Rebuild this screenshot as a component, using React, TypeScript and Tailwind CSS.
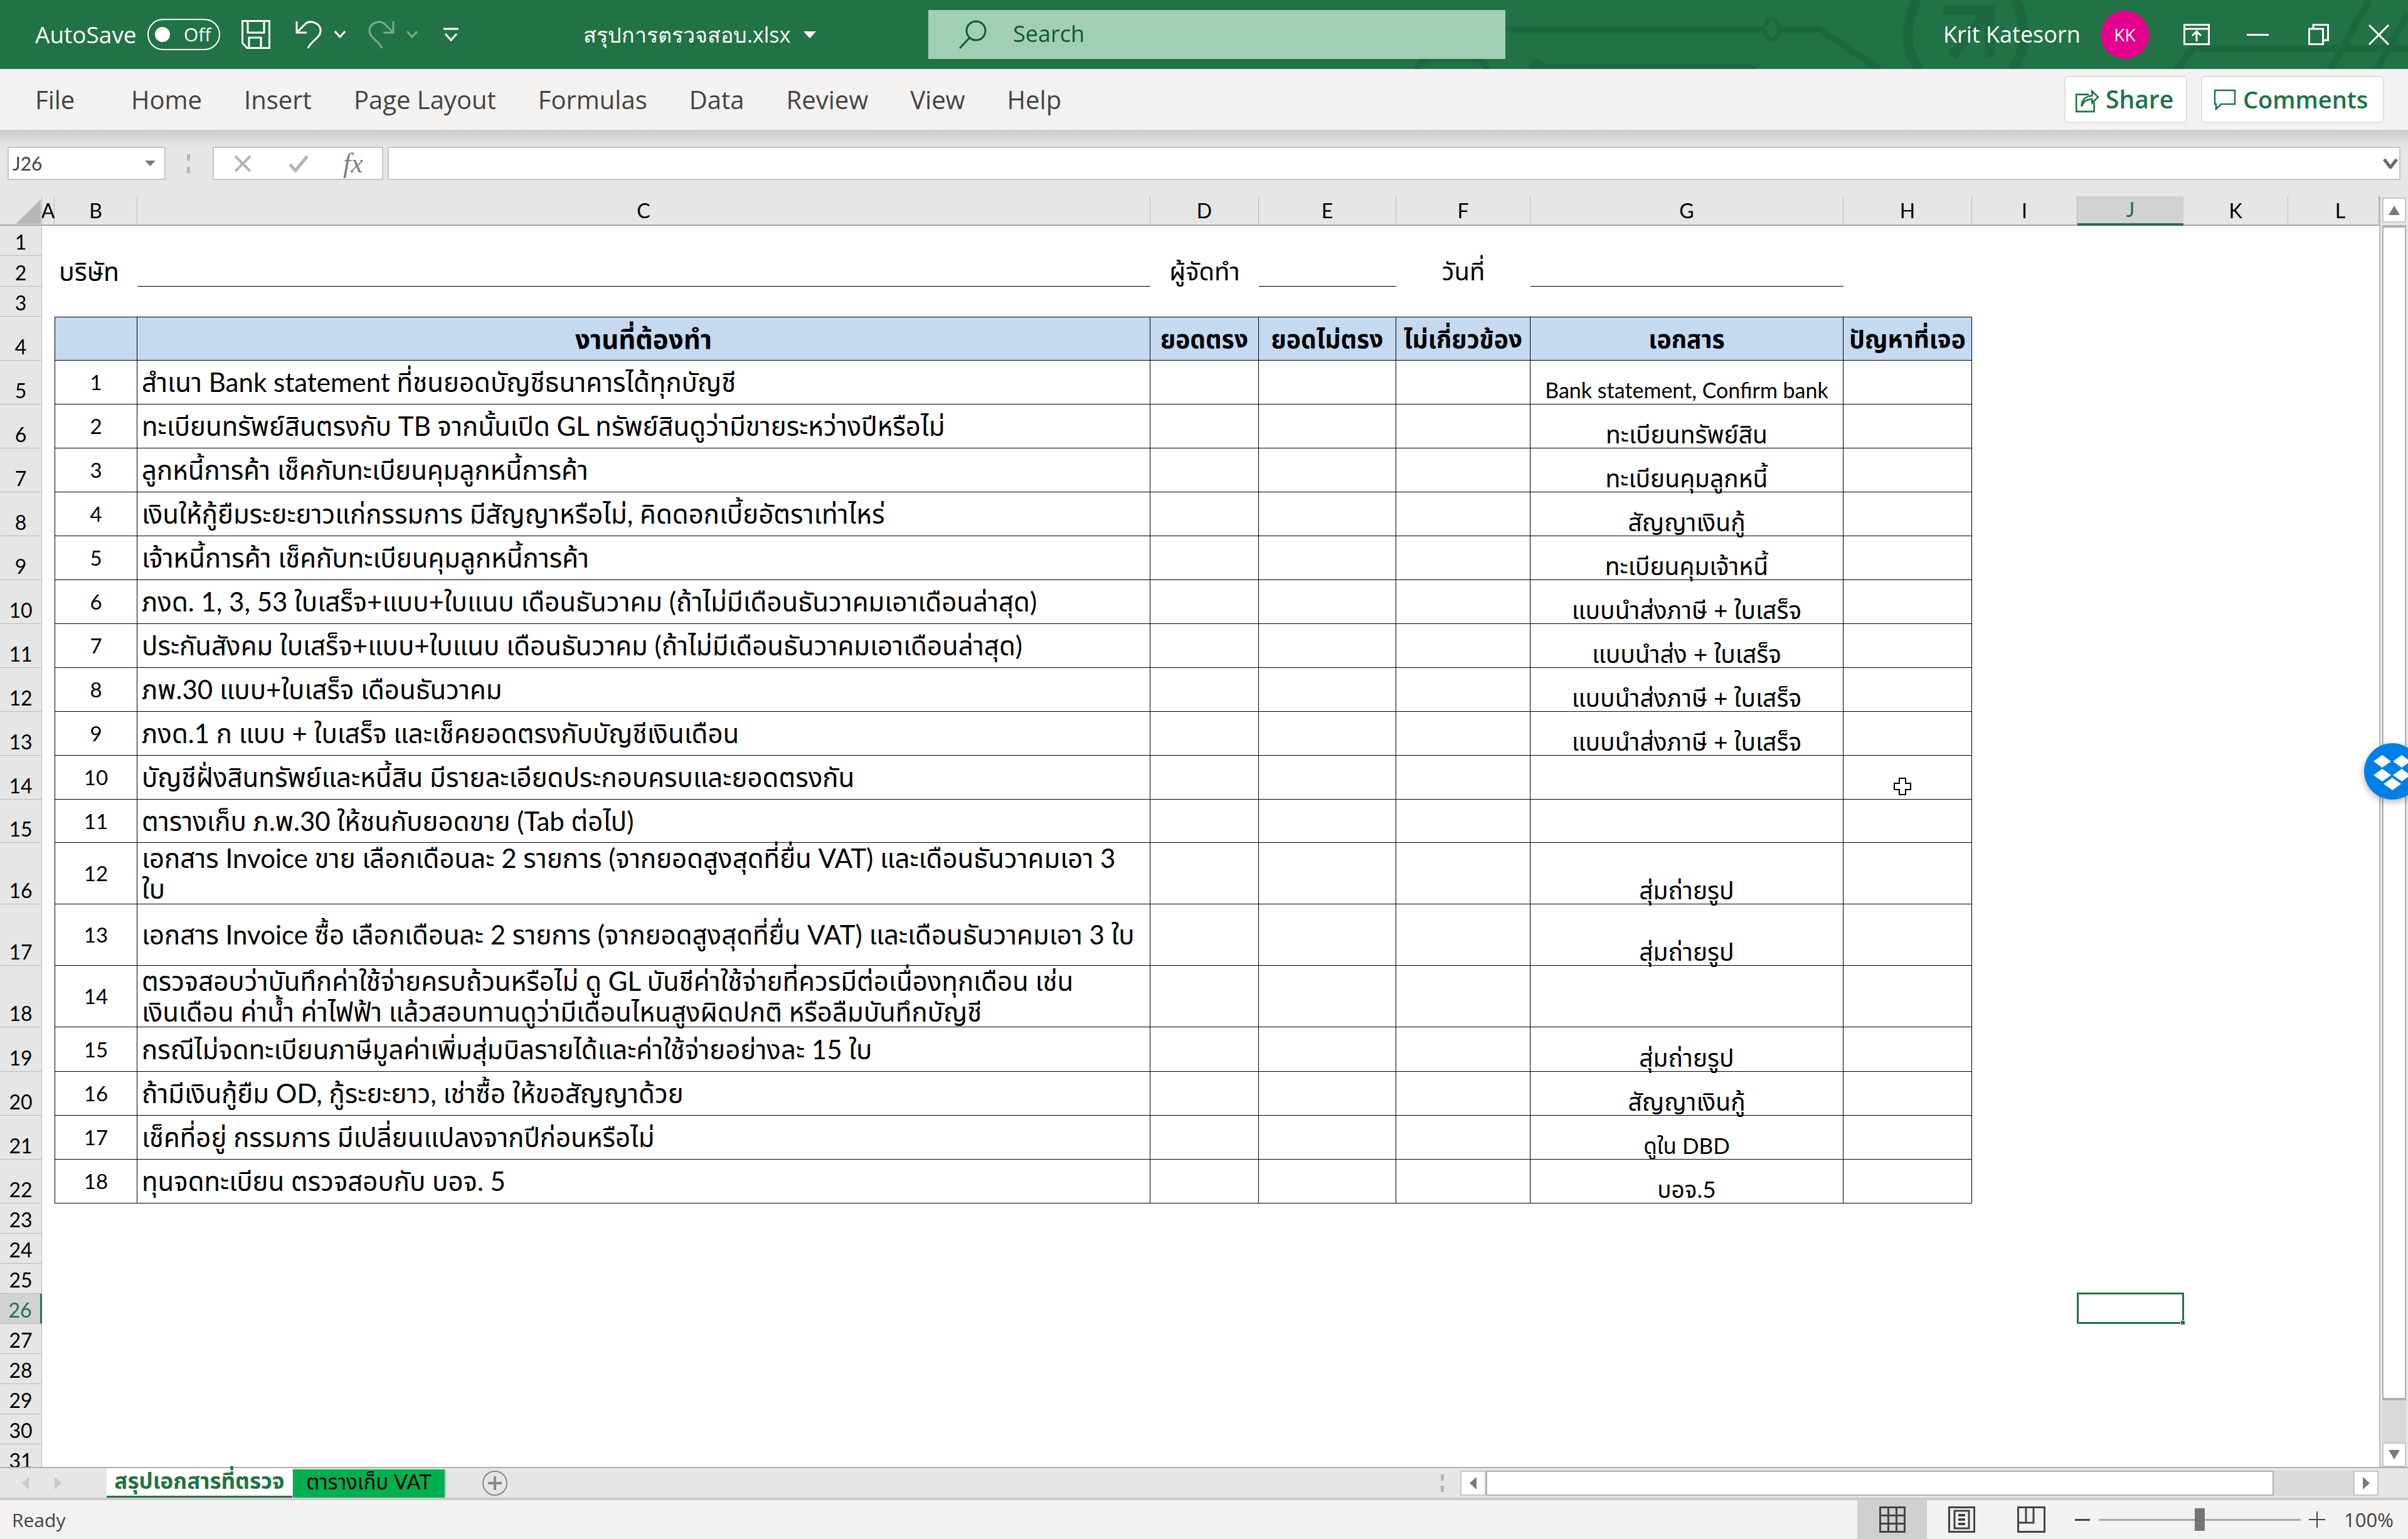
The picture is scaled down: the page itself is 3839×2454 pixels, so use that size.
const tasks = [
  { label: 'สำเนา Bank statement ที่ชนยอดบัญชีธนาคารได้ทุกบัญชี', doc: 'Bank statement, Confirm bank', docSize: 'text-[34px]' },
  { label: 'ทะเบียนทรัพย์สินตรงกับ TB จากนั้นเปิด GL ทรัพย์สินดูว่ามีขายระหว่างปีหรือไม่', doc: 'ทะเบียนทรัพย์สิน', docSize: 'text-[39px]' },
  { label: 'ลูกหนี้การค้า เช็คกับทะเบียนคุมลูกหนี้การค้า', doc: 'ทะเบียนคุมลูกหนี้', docSize: 'text-[39px]' },
  { label: 'เงินให้กู้ยืมระยะยาวแก่กรรมการ มีสัญญาหรือไม่, คิดดอกเบี้ยอัตราเท่าไหร่', doc: 'สัญญาเงินกู้', docSize: 'text-[39px]' },
  { label: 'เจ้าหนี้การค้า เช็คกับทะเบียนคุมลูกหนี้การค้า', doc: 'ทะเบียนคุมเจ้าหนี้', docSize: 'text-[39px]' },
  { label: 'ภงด. 1, 3, 53 ใบเสร็จ+แบบ+ใบแนบ เดือนธันวาคม (ถ้าไม่มีเดือนธันวาคมเอาเดือนล่าสุด)', doc: 'แบบนำส่งภาษี + ใบเสร็จ', docSize: 'text-[39px]' },
  { label: 'ประกันสังคม ใบเสร็จ+แบบ+ใบแนบ เดือนธันวาคม (ถ้าไม่มีเดือนธันวาคมเอาเดือนล่าสุด)', doc: 'แบบนำส่ง + ใบเสร็จ', docSize: 'text-[39px]' },
  { label: 'ภพ.30 แบบ+ใบเสร็จ เดือนธันวาคม', doc: 'แบบนำส่งภาษี + ใบเสร็จ', docSize: 'text-[39px]' },
  { label: 'ภงด.1 ก แบบ + ใบเสร็จ และเช็คยอดตรงกับบัญชีเงินเดือน', doc: 'แบบนำส่งภาษี + ใบเสร็จ', docSize: 'text-[39px]' },
  { label: 'บัญชีฝั่งสินทรัพย์และหนี้สิน มีรายละเอียดประกอบครบและยอดตรงกัน', doc: '', docSize: '' },
  { label: 'ตารางเก็บ ภ.พ.30 ให้ชนกับยอดขาย (Tab ต่อไป)', doc: '', docSize: '' },
  { label: 'เอกสาร Invoice ขาย เลือกเดือนละ 2 รายการ (จากยอดสูงสุดที่ยื่น VAT) และเดือนธันวาคมเอา 3\nใบ', doc: 'สุ่มถ่ายรูป', docSize: 'text-[39px]' },
  { label: 'เอกสาร Invoice ซื้อ เลือกเดือนละ 2 รายการ (จากยอดสูงสุดที่ยื่น VAT) และเดือนธันวาคมเอา 3 ใบ', doc: 'สุ่มถ่ายรูป', docSize: 'text-[39px]' },
  { label: 'ตรวจสอบว่าบันทึกค่าใช้จ่ายครบถ้วนหรือไม่ ดู GL บันชีค่าใช้จ่ายที่ควรมีต่อเนื่องทุกเดือน เช่น\nเงินเดือน ค่าน้ำ ค่าไฟฟ้า แล้วสอบทานดูว่ามีเดือนไหนสูงผิดปกติ หรือลืมบันทึกบัญชี', doc: '', docSize: '' },
  { label: 'กรณีไม่จดทะเบียนภาษีมูลค่าเพิ่มสุ่มบิลรายได้และค่าใช้จ่ายอย่างละ 15 ใบ', doc: 'สุ่มถ่ายรูป', docSize: 'text-[39px]' },
  { label: 'ถ้ามีเงินกู้ยืม OD, กู้ระยะยาว, เช่าซื้อ ให้ขอสัญญาด้วย', doc: 'สัญญาเงินกู้', docSize: 'text-[39px]' },
  { label: 'เช็คที่อยู่ กรรมการ มีเปลี่ยนแปลงจากปีก่อนหรือไม่', doc: 'ดูใน DBD', docSize: 'text-[35px]' },
  { label: 'ทุนจดทะเบียน ตรวจสอบกับ บอจ. 5', doc: 'บอจ.5', docSize: 'text-[37px]' },
];

const columns = ['A', 'B', 'C', 'D', 'E', 'F', 'G', 'H', 'I', 'J', 'K', 'L'];
const tableHeaders = ['', 'งานที่ต้องทำ', 'ยอดตรง', 'ยอดไม่ตรง', 'ไม่เกี่ยวข้อง', 'เอกสาร', 'ปัญหาที่เจอ'];

const tableCell = 'border-r border-b border-black flex items-center';

function RowHead({ n }: { n: number }) {
  const active = n === 26;
  return (
    <div
      className={`flex items-end justify-center border-b border-[#b9b9b9] text-[32px] leading-[42px] ${
        active ? 'bg-[#d2d2d2] text-[#217346] border-r-[3px] border-r-[#217346]' : 'bg-[#e6e6e6] text-black border-r border-r-[#b9b9b9]'
      }`}
    >
      {n}
    </div>
  );
}

function Blank({ n, count }: { n: number; count: number }) {
  return (
    <>
      {Array.from({ length: count }).map((_, i) => (
        <div key={`${n}-${i}`} />
      ))}
    </>
  );
}

function TitleBar() {
  return (
    <div className="relative flex h-[110px] items-center overflow-hidden bg-[#217346] font-['Open_Sans',sans-serif] text-white">
      <svg className="absolute left-0 top-0" width="3839" height="110" fill="none" stroke="#1e6840" strokeWidth="11">
        <path d="M2400 47H2813M2838 47H2900L2995 110" />
        <ellipse cx="2825" cy="47" rx="11" ry="17" strokeWidth="7" />
        <path d="M2600 108H2790L2800 112" />
        <path d="M2259 112C2262 94 2280 92 2314 92C2350 92 2368 94 2371 112" />
        <circle cx="2450" cy="106" r="7" />
        <path d="M2450 108H2640" />
        <path d="M3056 0C3036 40 3036 80 3060 110M3212 0C3232 40 3232 80 3208 110" strokeWidth="16" />
        <path d="M3098 16H3172V92M3172 16L3112 90" strokeWidth="16" />
        <path d="M3470 110L3497 77H3839" />
        <path d="M3777 0L3715 110M3839 20L3790 110" />
      </svg>

      <div className="relative ml-[56px] flex items-center">
        <span className="w-[164px] whitespace-nowrap text-[37px]">AutoSave</span>
        <div className="ml-[15px] flex h-[50px] w-[116px] items-center rounded-full border-2 border-white pl-[10px]">
          <div className="h-[24px] w-[24px] rounded-full bg-white" />
          <span className="ml-[22px] text-[30px] leading-none">Off</span>
        </div>
        <svg className="ml-[34px]" width="46" height="46" viewBox="0 0 46 46" fill="none" stroke="white" strokeWidth="3">
          <path d="M1.5 1.5H44.5V44.5H9L1.5 37Z" />
          <path d="M10 1.5V20H36V1.5M12 44.5V28H31V44.5" />
        </svg>
        <svg className="ml-[39px]" width="44" height="46" viewBox="0 0 44 46" fill="none" stroke="white" strokeWidth="3">
          <path d="M3 2V20H19" />
          <path d="M3 20L18 5C28 -1 42 7 41 18C40 29 26 33 21 45" />
        </svg>
        <svg className="ml-[18px]" width="20" height="12" viewBox="0 0 20 12" fill="none" stroke="white" strokeWidth="3">
          <path d="M2 1L10 10L18 1" />
        </svg>
        <svg className="ml-[34px] opacity-40" width="44" height="46" viewBox="0 0 44 46" fill="none" stroke="white" strokeWidth="3">
          <path d="M41 2V20H25" />
          <path d="M41 20L26 5C16 -1 2 7 3 18C4 29 18 33 23 45" />
        </svg>
        <svg className="ml-[17px] opacity-40" width="20" height="12" viewBox="0 0 20 12" fill="none" stroke="white" strokeWidth="3">
          <path d="M2 1L10 10L18 1" />
        </svg>
        <svg className="ml-[40px]" width="24" height="22" viewBox="0 0 24 22" fill="none" stroke="white" strokeWidth="3">
          <path d="M0 2H24" />
          <path d="M3 10L12 20L21 10" />
        </svg>
        <span className="ml-[199px] text-[34px]">สรุปการตรวจสอบ.xlsx</span>
        <svg className="ml-[21px]" width="20" height="11" viewBox="0 0 20 11" fill="white">
          <path d="M0 0H20L10 11Z" />
        </svg>
      </div>

      <div className="absolute left-[1480px] top-[16px] flex h-[78px] w-[920px] items-center bg-[#a1cfb6] text-[#0f5b2e]">
        <svg className="ml-[48px]" width="46" height="46" viewBox="0 0 46 46" fill="none" stroke="currentColor" strokeWidth="3">
          <circle cx="28" cy="17" r="15" />
          <path d="M18 28L2 45" />
        </svg>
        <span className="ml-[41px] pb-[3px] text-[36px]">Search</span>
      </div>

      <div className="absolute left-[3098px] top-0 flex h-[110px] items-center">
        <span className="w-[217px] whitespace-nowrap text-[36px]">Krit Katesorn</span>
        <div className="ml-[34px] flex h-[77px] w-[77px] items-center justify-center rounded-full bg-[#e3008c] text-[28px]">KK</div>
        <svg className="ml-[55px]" width="42" height="34" viewBox="0 0 42 34" fill="none" stroke="white" strokeWidth="3">
          <rect x="1.5" y="1.5" width="39" height="31" />
          <path d="M1.5 8H40.5M21 28V13M14 19L21 12L28 19" />
        </svg>
        <svg className="ml-[59px]" width="35" height="3" viewBox="0 0 35 3" fill="white">
          <rect width="35" height="3" />
        </svg>
        <svg className="ml-[63px]" width="33" height="34" viewBox="0 0 33 34" fill="none" stroke="white" strokeWidth="3">
          <rect x="1.5" y="8" width="22" height="24.5" />
          <path d="M8 8V1.5H31.5V26H24" />
        </svg>
        <svg className="ml-[63px]" width="33" height="33" viewBox="0 0 33 33" fill="none" stroke="white" strokeWidth="3">
          <path d="M1 1L32 32M32 1L1 32" />
        </svg>
      </div>
    </div>
  );
}

function RibbonTabs() {
  return (
    <div className="flex h-[97px] items-center bg-[#f3f2f1] font-['Open_Sans',sans-serif] text-[40px] text-[#444444]">
      <span className="ml-[56px] w-[153px]">File</span>
      <div className="flex gap-[67px]">
        <span>Home</span>
        <span>Insert</span>
        <span>Page Layout</span>
        <span>Formulas</span>
        <span>Data</span>
        <span>Review</span>
        <span>View</span>
        <span>Help</span>
      </div>
      <div className="ml-auto mr-[38px] flex gap-[22px] text-[#217346]">
        <button className="flex h-[75px] w-[196px] items-center gap-[10px] rounded-md border-2 border-[#e1dfdd] bg-white pl-[14px] font-semibold">
          <svg width="40" height="42" viewBox="0 0 38 40" fill="none" stroke="#217346" strokeWidth="2.5">
            <path d="M22 12H3V38H30V24" />
            <path d="M11 30C11 20 18 14 27 14V7L36 16L27 25V19C20 19 14 22 11 30Z" />
          </svg>
          <span className="text-[39px]">Share</span>
        </button>
        <button className="flex h-[75px] w-[292px] items-center gap-[11px] rounded-md border-2 border-[#e1dfdd] bg-white pl-[18px] font-semibold">
          <svg width="36" height="34" viewBox="0 0 36 34" fill="none" stroke="#217346" strokeWidth="2.5">
            <path d="M2 2H34V24H12L4 32V24H2Z" />
          </svg>
          <span className="text-[38px]">Comments</span>
        </button>
      </div>
    </div>
  );
}

function FormulaBar() {
  return (
    <>
      <div className="h-[27px] bg-gradient-to-b from-[#cbcbcb] to-[#e6e6e6]" />
      <div className="flex h-[53px] items-stretch pl-[12px] pr-[12px]">
        <div className="flex w-[252px] items-center justify-between border-2 border-[#c6c6c6] bg-white pl-[6px] pr-[14px]">
          <span className="text-[30px] text-[#444444]">J26</span>
          <svg width="17" height="9" viewBox="0 0 17 9" fill="#7a7a7a">
            <path d="M0 0H17L8.5 9Z" />
          </svg>
        </div>
        <div className="flex w-[75px] items-center justify-center pr-[3px]">
          <div className="h-[30px] w-[5px] border-l-[5px] border-dashed border-[#b8b8b8]" />
        </div>
        <div className="flex w-[272px] items-center border-2 border-[#c6c6c6] bg-white text-[#b4b4b4]">
          <svg className="ml-[32px]" width="28" height="28" viewBox="0 0 28 28" fill="none" stroke="currentColor" strokeWidth="4">
            <path d="M2 2L26 26M26 2L2 26" />
          </svg>
          <svg className="ml-[58px]" width="34" height="28" viewBox="0 0 34 28" fill="none" stroke="currentColor" strokeWidth="5">
            <path d="M3 15L12 25L31 2" />
          </svg>
          <span className="ml-[54px] font-['Liberation_Serif',serif] text-[44px] italic leading-none text-[#7f7f7f]">fx</span>
        </div>
        <div className="ml-[7px] flex flex-1 items-center justify-end border-2 border-[#c6c6c6] bg-white pr-[2px]">
          <svg width="24" height="16" viewBox="0 0 24 16" fill="none" stroke="#6a6a6a" strokeWidth="5">
            <path d="M2 1L12 14L22 1" />
          </svg>
        </div>
      </div>
      <div className="h-[26px]" />
    </>
  );
}

function Sheet() {
  return (
    <div className="grid h-[2026px] w-[3793px] grid-cols-[67px_20px_132px_1615px_173px_219px_214px_499px_205px_168px_169px_167px_145px] grid-rows-[47px_48px_49px_48px_70px_70px_70px_70px_70px_70px_70px_70px_70px_70px_70px_69px_98px_98px_98px_71px_70px_70px_70px_48px_48px_48px_48px_48px_48px_48px_48px_48px] overflow-hidden bg-white text-[42px] leading-[49px] text-black">
      {/* column header */}
      <div className="relative border-r border-b-2 border-r-[#b9b9b9] border-b-[#a6a6a6] bg-[#e6e6e6]">
        <svg className="absolute left-[25px] top-[5px]" width="40" height="39" viewBox="0 0 40 39" fill="#b7b7b7">
          <path d="M40 0V39H0Z" />
        </svg>
      </div>
      {columns.map(c => (
        <div
          key={c}
          className={`flex items-end justify-center border-b-2 pb-[4px] text-[32px] leading-[36px] ${
            c === 'J' ? 'border-b-[4px] border-b-[#217346] bg-[#d2d2d2] text-[#217346]' : 'border-b-[#a6a6a6] border-r border-r-[#b9b9b9] bg-[#e6e6e6]'
          } ${c === 'L' ? 'pl-[22px]' : ''}`}
        >
          {c}
        </div>
      ))}

      {/* row 1 */}
      <RowHead n={1} />
      <Blank n={1} count={12} />

      {/* row 2 */}
      <RowHead n={2} />
      <div />
      <div className="flex items-center whitespace-nowrap pl-[7px] text-[41px]">บริษัท</div>
      <div className="border-b border-black" />
      <div className="flex items-center justify-center text-[40px]">ผู้จัดทำ</div>
      <div className="border-b border-black" />
      <div className="flex items-center justify-center text-[40px]">วันที่</div>
      <div className="border-b border-black" />
      <Blank n={2} count={5} />

      {/* row 3 */}
      <RowHead n={3} />
      <Blank n={3} count={12} />

      {/* row 4 table head */}
      <RowHead n={4} />
      <div />
      {tableHeaders.map((h, i) => (
        <div
          key={i}
          className={`flex items-center justify-center whitespace-nowrap border-t border-r border-b border-black bg-[#c5d9f1] font-bold ${i === 0 ? 'border-l' : ''} ${i === 1 ? 'text-[42px]' : 'text-[39px]'}`}
        >
          {h}
        </div>
      ))}
      <Blank n={4} count={4} />

      {/* rows 5-22 */}
      {tasks.map((t, i) => {
        const n = i + 5;
        return (
          <div key={n} className="contents">
            <RowHead n={n} />
            <div />
            <div className={`${tableCell} justify-center border-l text-[33px]`}>{i + 1}</div>
            <div className={`${tableCell} whitespace-pre pl-[7px]`}>{t.label}</div>
            <div className={tableCell} />
            <div className={tableCell} />
            <div className={tableCell} />
            <div className={`flex items-end justify-center whitespace-nowrap border-r border-b border-black pb-[1px] leading-[42px] ${t.docSize}`}>{t.doc}</div>
            <div className={tableCell} />
            <Blank n={n} count={4} />
          </div>
        );
      })}

      {/* rows 23-31 */}
      {[23, 24, 25, 26, 27, 28, 29, 30, 31].map(n => (
        <div key={n} className="contents">
          <RowHead n={n} />
          {n === 26 ? (
            <>
              <Blank n={n} count={9} />
              <div className="relative -mx-[1px] -mt-[2px] border-[3px] border-[#217346]">
                <div className="absolute -bottom-[5px] -right-[5px] h-[8px] w-[8px] border border-white bg-[#217346]" />
              </div>
              <Blank n={n + 100} count={2} />
            </>
          ) : (
            <Blank n={n} count={12} />
          )}
        </div>
      ))}
    </div>
  );
}

function VerticalScroll() {
  return (
    <div className="flex h-[2026px] w-[46px] flex-col items-center border-l-2 border-[#b9b9b9] bg-[#e6e6e6] pt-[2px]">
      <div className="flex h-[40px] w-[38px] items-center justify-center border-2 border-[#c6c6c6] bg-white">
        <svg width="18" height="15" viewBox="0 0 18 15" fill="#7a7a7a">
          <path d="M9 0L18 15H0Z" />
        </svg>
      </div>
      <div className="mt-[4px] h-[1874px] w-[38px] border-x-2 border-y-4 border-[#b0b0b0] bg-white" />
      <div className="w-[38px] flex-1 bg-[#d9d9d9]" />
      <div className="flex h-[39px] w-[38px] items-center justify-center border-2 border-[#c6c6c6] bg-white">
        <svg width="18" height="15" viewBox="0 0 18 15" fill="#7a7a7a">
          <path d="M0 0H18L9 15Z" />
        </svg>
      </div>
    </div>
  );
}

function TabBar() {
  return (
    <div className="flex h-[53px] items-stretch border-t-2 border-b-4 border-t-[#b0b0b0] border-b-[#c9c9c9] bg-[#e6e6e6]">
      <div className="flex w-[170px] items-center pl-[35px]">
        <svg width="11" height="20" viewBox="0 0 11 20" fill="#c8c8c8">
          <path d="M11 0V20L0 10Z" />
        </svg>
        <svg className="ml-[41px]" width="11" height="20" viewBox="0 0 11 20" fill="#c8c8c8">
          <path d="M0 0V20L11 10Z" />
        </svg>
      </div>
      <div className="flex w-[296px] items-center justify-center border-b-[3px] border-[#217346] bg-white pb-[5px] text-[35px] font-bold text-[#217346]">
        สรุปเอกสารที่ตรวจ
      </div>
      <div className="ml-[1px] mt-[2px] flex w-[242px] items-center justify-center bg-[#00b050] pb-[6px] text-[33px] text-black">
        ตารางเก็บ VAT
      </div>
      <div className="my-[2px] ml-[1px] w-[1px] bg-[#a6a6a6]" />
      <div className="flex w-[155px] items-center justify-center">
        <div className="flex h-[40px] w-[40px] items-center justify-center rounded-full border-2 border-[#8a8a8a] text-[#8a8a8a]">
          <svg width="22" height="22" viewBox="0 0 22 22" fill="currentColor">
            <path d="M9 0H13V9H22V13H13V22H9V13H0V9H9Z" />
          </svg>
        </div>
      </div>
      <div className="flex flex-1 items-center justify-end">
        <div className="mr-[26px] h-[28px] w-[5px] border-l-[5px] border-dashed border-[#b8b8b8]" />
        <div className="flex h-[40px] w-[41px] items-center justify-center border-2 border-[#c6c6c6] bg-white">
          <svg width="11" height="20" viewBox="0 0 11 20" fill="#7a7a7a">
            <path d="M11 0V20L0 10Z" />
          </svg>
        </div>
        <div className="h-[40px] w-[1256px] border-x-2 border-y-2 border-[#b0b0b0] bg-white" />
        <div className="h-[40px] w-[127px] bg-[#d9d9d9]" />
        <div className="flex h-[40px] w-[40px] items-center justify-center border-2 border-[#c6c6c6] bg-white">
          <svg width="11" height="20" viewBox="0 0 11 20" fill="#7a7a7a">
            <path d="M0 0V20L11 10Z" />
          </svg>
        </div>
        <div className="w-[47px]" />
      </div>
    </div>
  );
}

function StatusBar() {
  return (
    <div className="flex h-[62px] items-center bg-[#f3f2f1] font-['Open_Sans',sans-serif] text-[#444444]">
      <span className="ml-[19px] text-[30px]">Ready</span>
      <div className="ml-auto flex h-full w-[111px] items-center justify-center bg-[#d0d0d0]">
        <svg width="42" height="42" viewBox="0 0 42 42" fill="none" stroke="#444444" strokeWidth="3">
          <rect x="1.5" y="1.5" width="39" height="39" />
          <path d="M14.5 1.5V40.5M27.5 1.5V40.5M1.5 14.5H40.5M1.5 27.5H40.5" />
        </svg>
      </div>
      <svg className="ml-[34px]" width="43" height="42" viewBox="0 0 43 42" fill="none" stroke="#444444" strokeWidth="3">
        <rect x="1.5" y="1.5" width="40" height="39" />
        <rect x="10" y="7" width="23" height="28" />
        <path d="M16 14H27M16 21H27M16 28H27" strokeWidth="4" />
      </svg>
      <svg className="ml-[67px]" width="45" height="42" viewBox="0 0 45 42" fill="none" stroke="#444444" strokeWidth="3">
        <rect x="1.5" y="1.5" width="42" height="39" />
        <path d="M1.5 26H26V1.5M14 1.5V26" />
      </svg>
      <svg className="ml-[47px]" width="24" height="3" viewBox="0 0 24 3" fill="#444444">
        <rect width="24" height="3" />
      </svg>
      <div className="relative ml-[14px] h-[3px] w-[322px] bg-[#aaaaaa]">
        <div className="absolute left-[153px] top-[-17px] h-[36px] w-[16px] bg-[#767676]" />
      </div>
      <svg className="ml-[13px]" width="26" height="26" viewBox="0 0 26 26" fill="#444444">
        <path d="M12 0H14V12H26V14H14V26H12V14H0V12H12Z" />
      </svg>
      <span className="ml-[30px] w-[102px] text-[31px]">100%</span>
    </div>
  );
}

export default function App() {
  return (
    <div className="relative flex h-[2454px] w-[3839px] flex-col overflow-hidden bg-[#e6e6e6] font-['Lato','Noto_Sans_Thai',sans-serif]">
      <TitleBar />
      <RibbonTabs />
      <FormulaBar />
      <div className="flex">
        <Sheet />
        <VerticalScroll />
      </div>
      <TabBar />
      <StatusBar />

      {/* dropbox badge */}
      <div className="absolute left-[3769px] top-[1185px] h-[90px] w-[90px] rounded-full bg-[#0080e6] shadow-[0_4px_12px_rgba(0,0,0,0.3)]">
        <svg width="90" height="90" viewBox="0 0 90 90" fill="white">
          <path d="M29 19L43 29L29 39L15 29Z" />
          <path d="M60 19L74 29L60 39L46 29Z" />
          <path d="M29 41L43 51L29 61L15 51Z" />
          <path d="M60 41L74 51L60 61L46 51Z" />
          <path d="M45 55L59 65L45 75L31 65Z" />
        </svg>
      </div>

      {/* mouse cursor */}
      <svg className="absolute left-[3018px] top-[1239px]" width="30" height="30" viewBox="0 0 30 30" fill="white" stroke="black" strokeWidth="2">
        <path d="M10 2H20V10H28V20H20V28H10V20H2V10H10Z" />
      </svg>
    </div>
  );
}
